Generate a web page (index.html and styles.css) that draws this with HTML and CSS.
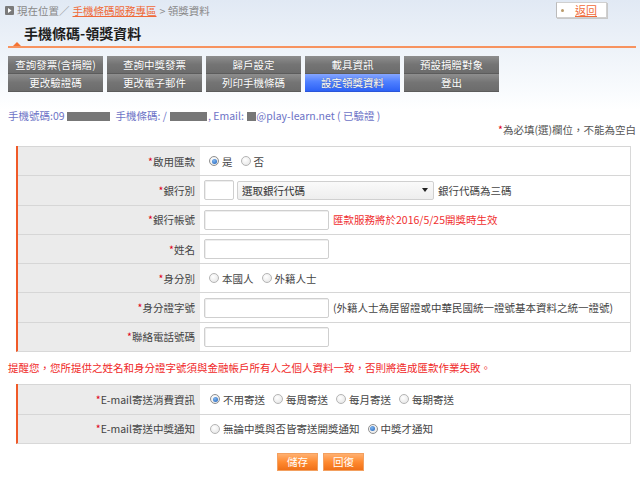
FILE: index.html
```html
<!DOCTYPE html>
<html lang="zh-Hant">
<head>
<meta charset="utf-8">
<title>手機條碼-領獎資料</title>
<link rel="stylesheet" href="styles.css">
</head>
<body>
<div class="crumb">
  <svg class="crumb-icon" width="9" height="9" viewBox="0 0 9 9"><rect width="9" height="9" rx="1" fill="#7a7a7a"/><path d="M3 2 L6.5 4.5 L3 7 Z" fill="#fff"/></svg>
  <span class="muted">現在位置／</span>
  <a class="crumb-link" href="#">手機條碼服務專區</a>
  <span class="muted">&gt; 領獎資料</span>
  <a class="back" href="#"><span class="back-dot"></span><span class="back-text">返回</span></a>
</div>
<h1 class="title">手機條碼-領獎資料</h1>
<div class="rule"><span class="rule-tri"></span></div>

<nav class="tabs">
  <a class="tab" href="#">查詢發票(含捐贈)</a>
  <a class="tab" href="#">查詢中獎發票</a>
  <a class="tab" href="#">歸戶設定</a>
  <a class="tab" href="#">載具資訊</a>
  <a class="tab" href="#">預設捐贈對象</a>
  <a class="tab" href="#">更改驗證碼</a>
  <a class="tab" href="#">更改電子郵件</a>
  <a class="tab" href="#">列印手機條碼</a>
  <a class="tab active" href="#">設定領獎資料</a>
  <a class="tab" href="#">登出</a>
</nav>

<div class="info">手機號碼:09<span class="redact r1"></span>手機條碼: /<span class="redact r2"></span>, Email: <span class="redact r3"></span>@play-learn.net ( 已驗證 )</div>
<div class="note"><span class="star">*</span>為必填(選)欄位，不能為空白</div>

<div class="form">
  <div class="row">
    <div class="lbl"><span class="star">*</span>啟用匯款</div>
    <div class="val">
      <label class="opt"><span class="radio on"></span>是</label>
      <label class="opt"><span class="radio"></span>否</label>
    </div>
  </div>
  <div class="row">
    <div class="lbl"><span class="star">*</span>銀行別</div>
    <div class="val">
      <span class="input w-code"></span>
      <span class="select"><span>選取銀行代碼</span><span class="caret"></span></span>
      <span class="hint">銀行代碼為三碼</span>
    </div>
  </div>
  <div class="row">
    <div class="lbl"><span class="star">*</span>銀行帳號</div>
    <div class="val">
      <span class="input w-std"></span>
      <span class="red-hint">匯款服務將於2016/5/25開獎時生效</span>
    </div>
  </div>
  <div class="row">
    <div class="lbl"><span class="star">*</span>姓名</div>
    <div class="val"><span class="input w-std"></span></div>
  </div>
  <div class="row">
    <div class="lbl"><span class="star">*</span>身分別</div>
    <div class="val">
      <label class="opt"><span class="radio"></span>本國人</label>
      <label class="opt"><span class="radio"></span>外籍人士</label>
    </div>
  </div>
  <div class="row">
    <div class="lbl"><span class="star">*</span>身分證字號</div>
    <div class="val">
      <span class="input w-std"></span>
      <span class="hint">(外籍人士為居留證或中華民國統一證號基本資料之統一證號)</span>
    </div>
  </div>
  <div class="row">
    <div class="lbl"><span class="star">*</span>聯絡電話號碼</div>
    <div class="val"><span class="input w-std"></span></div>
  </div>
</div>

<p class="warn">提醒您，您所提供之姓名和身分證字號須與金融帳戶所有人之個人資料一致，否則將造成匯款作業失敗。</p>

<div class="form form2">
  <div class="row">
    <div class="lbl"><span class="star">*</span>E-mail寄送消費資訊</div>
    <div class="val val-r">
      <label class="opt"><span class="radio on"></span>不用寄送</label>
      <label class="opt"><span class="radio"></span>每周寄送</label>
      <label class="opt"><span class="radio"></span>每月寄送</label>
      <label class="opt"><span class="radio"></span>每期寄送</label>
    </div>
  </div>
  <div class="row">
    <div class="lbl"><span class="star">*</span>E-mail寄送中獎通知</div>
    <div class="val val-r">
      <label class="opt"><span class="radio"></span>無論中獎與否皆寄送開獎通知</label>
      <label class="opt"><span class="radio on"></span>中獎才通知</label>
    </div>
  </div>
</div>

<div class="actions">
  <button class="btn" type="button">儲存</button>
  <button class="btn" type="button">回復</button>
</div>
</body>
</html>
```

FILE: styles.css
```css
html { background: #fff; }
body {
  margin: 0;
  font-family: "Noto Sans CJK TC", "Liberation Sans", sans-serif;
  font-size: 10.5px;
  color: #444;
  background: linear-gradient(#e1e9f4 0, #eef3f9 50px, #fafcfe 95px, #fff 110px) no-repeat;
  background-size: 100% 110px;
}

.crumb {
  display: flex;
  align-items: center;
  height: 20px;
  padding-left: 5px;
}
.crumb-icon { margin-right: 3px; flex: none; }
.muted { color: #888; }
.crumb-link {
  color: #f06a38;
  text-decoration: underline;
  margin: 0 3px 0 3px;
}
.back {
  margin-left: auto;
  margin-right: 33px;
  width: 51px;
  height: 16px;
  box-sizing: border-box;
  background: #fff;
  border: 1px solid #d0d0d0;
  border-left-color: #bbb;
  box-shadow: 1px 1px 0 #c8c8c8;
  display: flex;
  align-items: center;
  text-decoration: none;
}
.back-dot {
  width: 3px;
  height: 3px;
  border-radius: 50%;
  background: #b99a6a;
  margin: 0 0 0 4px;
}
.back-text {
  color: #f06a38;
  text-decoration: underline;
  margin-left: 11px;
  font-size: 11px;
}

.title {
  margin: 4px 0 0 24px;
  font-size: 14px;
  line-height: 18px;
  font-weight: bold;
  color: #1e1e1e;
}
.rule {
  margin: -1px 4px 0 8px;
  height: 5px;
  border-bottom: 2px solid #f7935f;
  display: flex;
  align-items: flex-end;
}
.rule-tri {
  margin-left: 5px;
  width: 0;
  height: 0;
  border-left: 4px solid transparent;
  border-right: 4px solid transparent;
  border-bottom: 4px solid #f47434;
}

.tabs {
  display: grid;
  grid-template-columns: repeat(5, 95px);
  grid-auto-rows: 18px;
  column-gap: 4px;
  margin: 8px 0 0 8px;
}
.tab {
  display: block;
  text-align: center;
  line-height: 18px;
  color: #fff;
  text-decoration: none;
  background: linear-gradient(#8e8e8e, #747474 50%, #6c6c6c);
  border-bottom: 1px solid #5c5c5c;
  box-sizing: border-box;
  text-shadow: 0 0 1px #555;
}
.tab.active {
  background: linear-gradient(#86a6ff, #4f80ff 45%, #2d62f6);
  border-bottom-color: #2a55d8;
}

.info {
  margin: 18px 0 0 8px;
  line-height: 12px;
  color: #6d73c6;
}
.redact {
  display: inline-block;
  height: 9px;
  background: #777;
  vertical-align: -1px;
}
.r1 { width: 43px; margin: 0 6px 0 2px; }
.r2 { width: 37px; margin: 0 1px 0 3px; }
.r3 { width: 9px; margin-left: 1px; }

.note {
  text-align: right;
  margin: 2px 4px 0 0;
  line-height: 12px;
  color: #555;
}
.star { color: #e00018; }

.form {
  margin: 10px 9px 0 16px;
  border: 1px solid #d8d8d8;
  border-top: none;
  border-left: 2px solid #f05a28;
}
.row {
  display: grid;
  grid-template-columns: 182px 1fr;
  height: 29.3px;
  box-sizing: border-box;
  border-top: 1px solid #d6d6d6;
}
.lbl {
  background: #ebebeb;
  display: flex;
  align-items: center;
  justify-content: flex-end;
  padding-right: 5px;
  color: #444;
}
.val {
  display: flex;
  align-items: center;
  padding-left: 4px;
  color: #444;
}
.val-r { padding-left: 10px; }

.opt {
  display: inline-flex;
  align-items: center;
  margin-right: 8px;
}
.val > .opt:first-child { margin-left: 5px; }
.val-r > .opt:first-child { margin-left: 0; }
.radio {
  width: 10px;
  height: 10px;
  box-sizing: border-box;
  border-radius: 50%;
  border: 1px solid #b4b4b4;
  background: radial-gradient(circle at 40% 35%, #fff, #e2e2e2);
  margin-right: 3px;
  display: inline-flex;
  align-items: center;
  justify-content: center;
}
.radio.on { border-color: #8f8f8f; }
.radio.on::after {
  content: "";
  width: 5px;
  height: 5px;
  border-radius: 50%;
  background: radial-gradient(circle at 40% 35%, #7fb6f0, #1d5fb8);
}

.input {
  display: inline-block;
  height: 20px;
  box-sizing: border-box;
  border: 1px solid #cfcfcf;
  border-radius: 2px;
  background: #fff;
  box-shadow: inset 1px 1px 0 #eee;
}
.w-code { width: 30px; }
.w-std { width: 125px; }
.select {
  display: inline-flex;
  align-items: center;
  justify-content: space-between;
  width: 197px;
  height: 19px;
  box-sizing: border-box;
  margin-left: 3px;
  padding: 0 5px 0 4px;
  border: 1px solid #d0d0d0;
  border-radius: 2px;
  background: linear-gradient(#fafafa, #eeeeee);
  color: #333;
}
.caret {
  width: 0;
  height: 0;
  border-left: 3px solid transparent;
  border-right: 3px solid transparent;
  border-top: 4px solid #222;
}
.hint { margin-left: 4px; color: #444; }
.red-hint { margin-left: 4px; color: #f03030; }

.warn {
  margin: 10px 0 0 8px;
  line-height: 12px;
  color: #f02828;
}
.form2 { margin-top: 10px; }
.form2 .row { height: 29.5px; }

.actions {
  display: flex;
  justify-content: center;
  gap: 5px;
  margin: 9px 0 0 0;
  padding-left: 1px;
}
.btn {
  width: 41px;
  height: 18px;
  padding: 0;
  border: 1px solid #f3a060;
  background: linear-gradient(#ffb070, #ff8a30 50%, #f07018);
  color: #fff;
  font-family: inherit;
  font-size: 10.5px;
  line-height: 16px;
}
```
